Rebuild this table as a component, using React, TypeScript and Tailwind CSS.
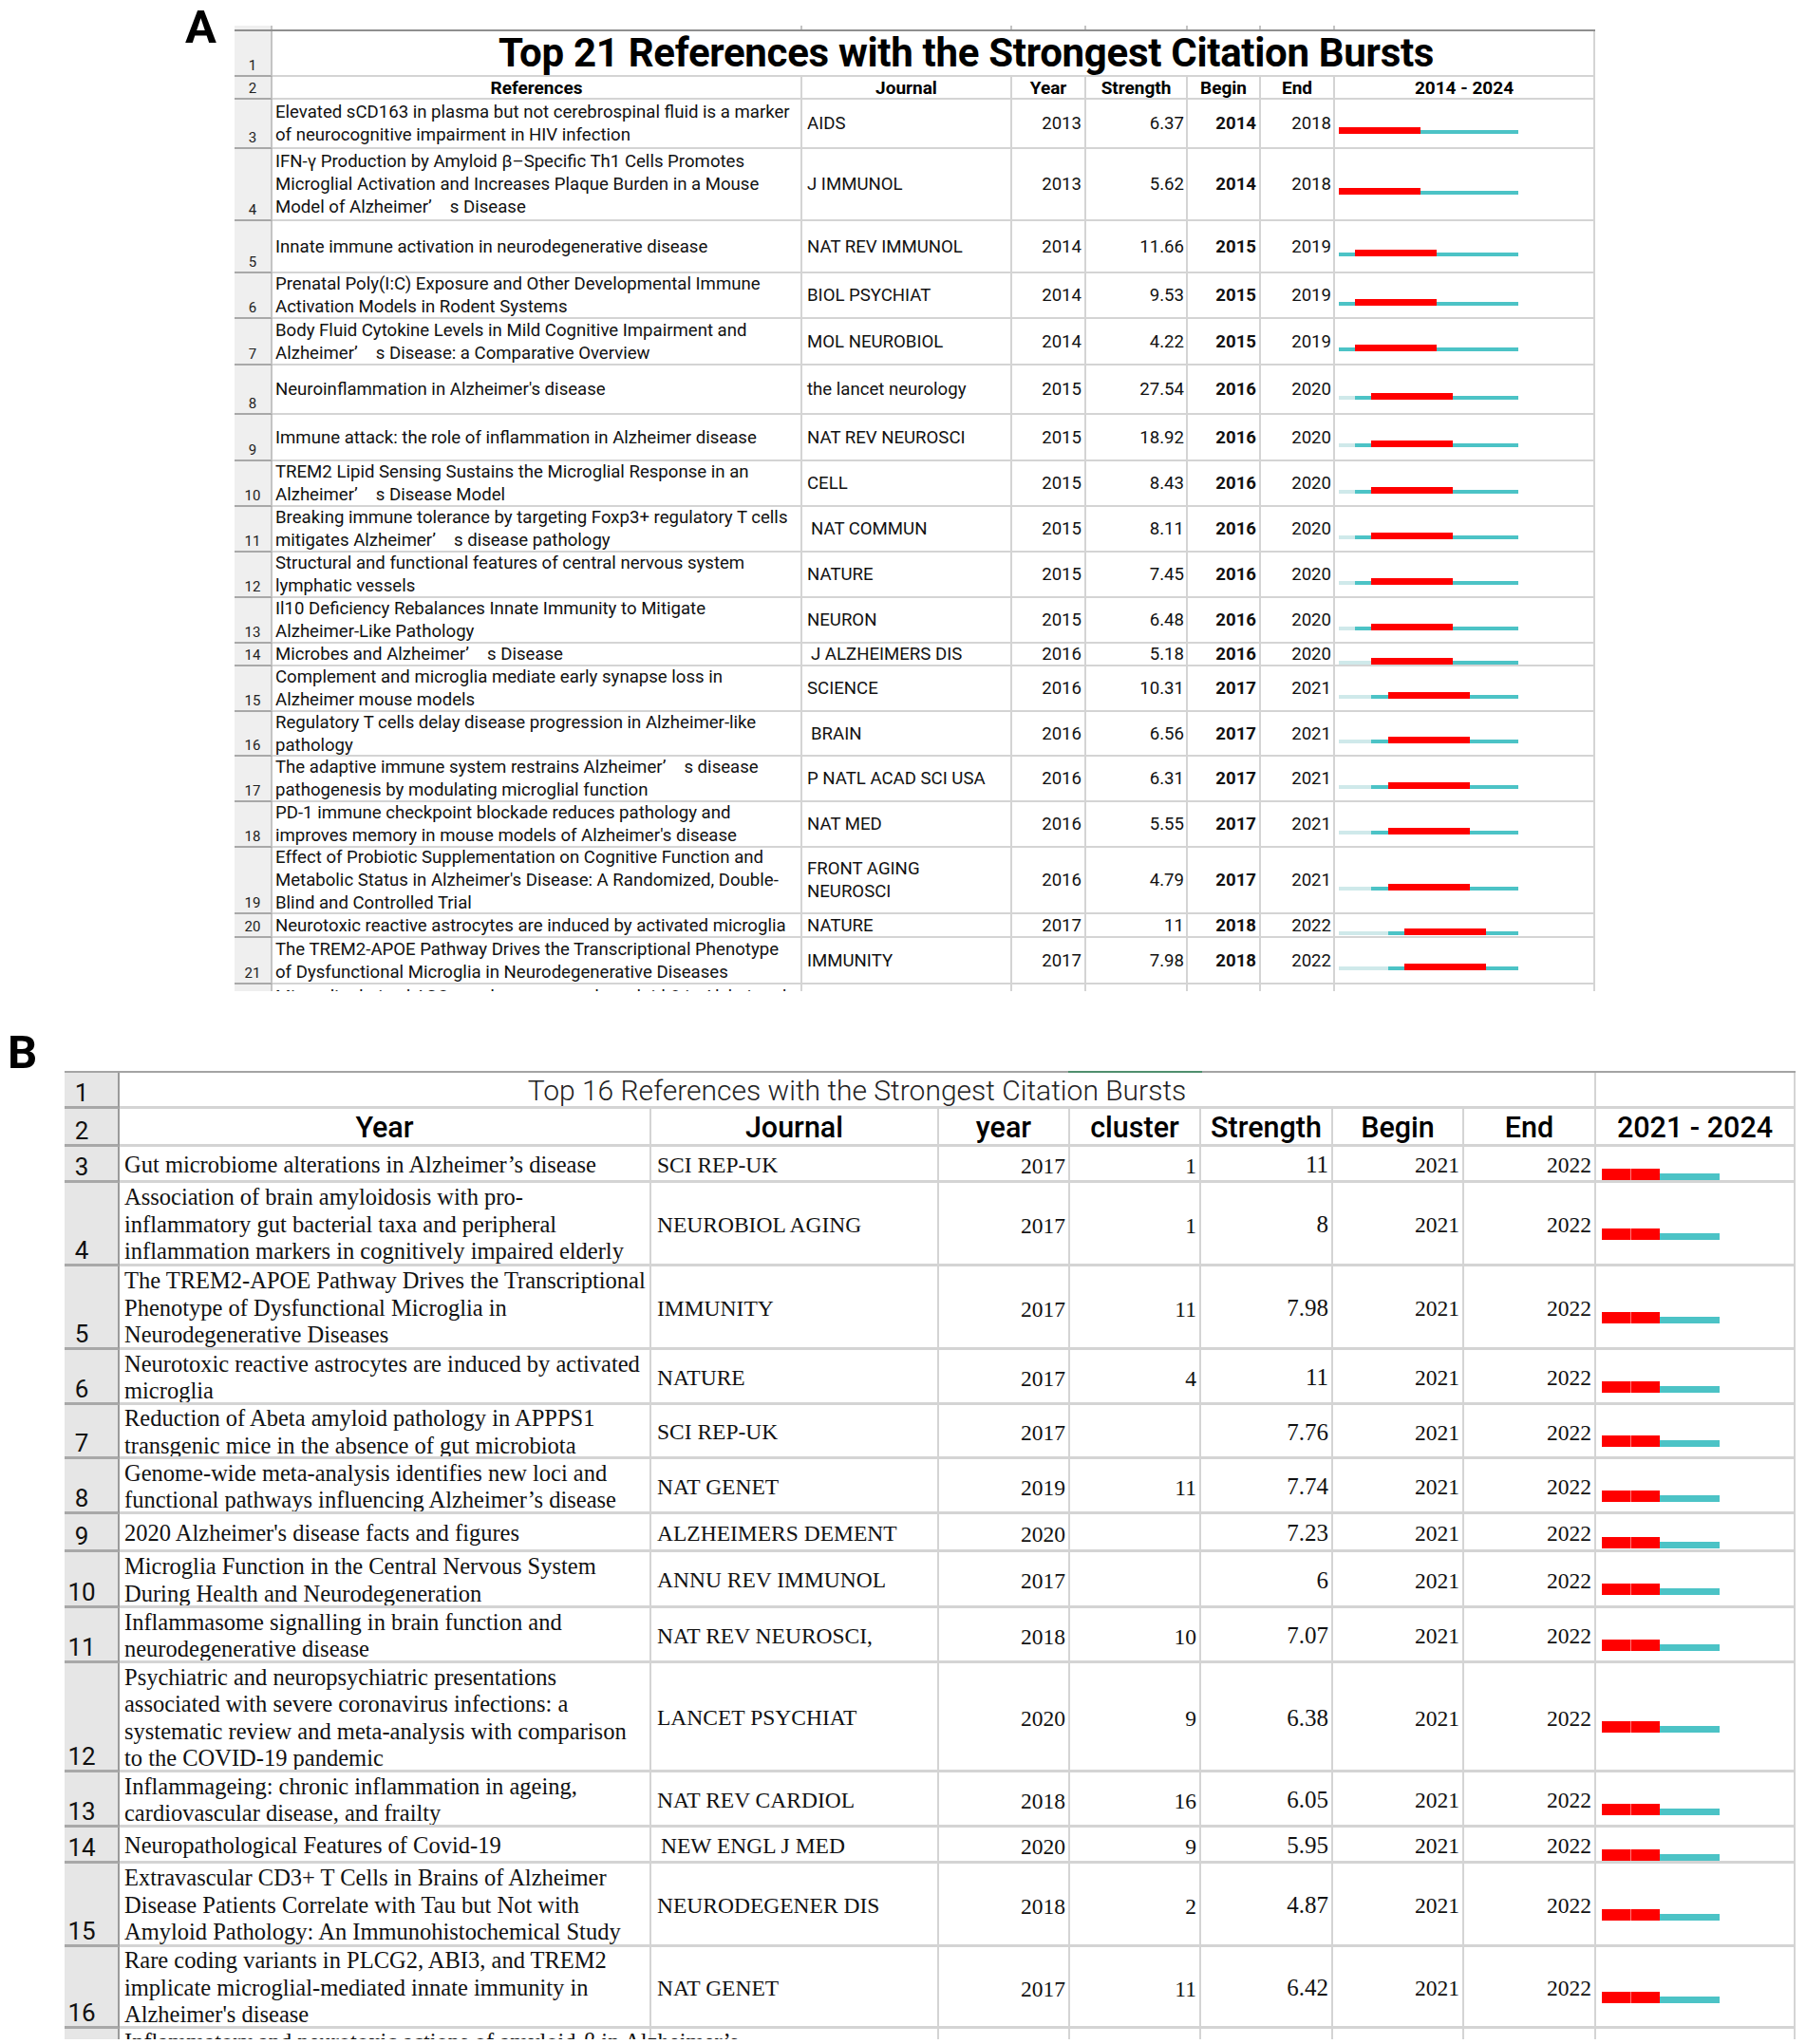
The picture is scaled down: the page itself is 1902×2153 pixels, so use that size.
import React from "react";

type ARow = {
  n: number;
  h: string;
  lines: string[];
  j: string[];
  ji?: boolean;
  y: number;
  s: string;
  b: number;
  e: number;
};

const aRows: ARow[] = [
  { n: 3, h: "h-[52px]", lines: ["Elevated sCD163 in plasma but not cerebrospinal fluid is a marker", "of neurocognitive impairment in HIV infection"], j: ["AIDS"], y: 2013, s: "6.37", b: 2014, e: 2018 },
  { n: 4, h: "h-[76px]", lines: ["IFN-γ Production by Amyloid β–Specific Th1 Cells Promotes", "Microglial Activation and Increases Plaque Burden in a Mouse", "Model of Alzheimer’\u2003s Disease"], j: ["J IMMUNOL"], y: 2013, s: "5.62", b: 2014, e: 2018 },
  { n: 5, h: "h-[55px]", lines: ["Innate immune activation in neurodegenerative disease"], j: ["NAT REV IMMUNOL"], y: 2014, s: "11.66", b: 2015, e: 2019 },
  { n: 6, h: "h-[48px]", lines: ["Prenatal Poly(I:C) Exposure and Other Developmental Immune", "Activation Models in Rodent Systems"], j: ["BIOL PSYCHIAT"], y: 2014, s: "9.53", b: 2015, e: 2019 },
  { n: 7, h: "h-[49px]", lines: ["Body Fluid Cytokine Levels in Mild Cognitive Impairment and", "Alzheimer’\u2003s Disease: a Comparative Overview"], j: ["MOL NEUROBIOL"], y: 2014, s: "4.22", b: 2015, e: 2019 },
  { n: 8, h: "h-[52px]", lines: ["Neuroinflammation in Alzheimer's disease"], j: ["the lancet neurology"], y: 2015, s: "27.54", b: 2016, e: 2020 },
  { n: 9, h: "h-[49px]", lines: ["Immune attack: the role of inflammation in Alzheimer disease"], j: ["NAT REV NEUROSCI"], y: 2015, s: "18.92", b: 2016, e: 2020 },
  { n: 10, h: "h-[48px]", lines: ["TREM2 Lipid Sensing Sustains the Microglial Response in an", "Alzheimer’\u2003s Disease Model"], j: ["CELL"], y: 2015, s: "8.43", b: 2016, e: 2020 },
  { n: 11, h: "h-[48px]", lines: ["Breaking immune tolerance by targeting Foxp3+ regulatory T cells", "mitigates Alzheimer’\u2003s disease pathology"], j: ["NAT COMMUN"], ji: true, y: 2015, s: "8.11", b: 2016, e: 2020 },
  { n: 12, h: "h-[48px]", lines: ["Structural and functional features of central nervous system", "lymphatic vessels"], j: ["NATURE"], y: 2015, s: "7.45", b: 2016, e: 2020 },
  { n: 13, h: "h-[48px]", lines: ["Il10 Deficiency Rebalances Innate Immunity to Mitigate", "Alzheimer-Like Pathology"], j: ["NEURON"], y: 2015, s: "6.48", b: 2016, e: 2020 },
  { n: 14, h: "h-[24px]", lines: ["Microbes and Alzheimer’\u2003s Disease"], j: ["J ALZHEIMERS DIS"], ji: true, y: 2016, s: "5.18", b: 2016, e: 2020 },
  { n: 15, h: "h-[48px]", lines: ["Complement and microglia mediate early synapse loss in", "Alzheimer mouse models"], j: ["SCIENCE"], y: 2016, s: "10.31", b: 2017, e: 2021 },
  { n: 16, h: "h-[47px]", lines: ["Regulatory T cells delay disease progression in Alzheimer-like", "pathology"], j: ["BRAIN"], ji: true, y: 2016, s: "6.56", b: 2017, e: 2021 },
  { n: 17, h: "h-[48px]", lines: ["The adaptive immune system restrains Alzheimer’\u2003s disease", "pathogenesis by modulating microglial function"], j: ["P NATL ACAD SCI USA"], y: 2016, s: "6.31", b: 2017, e: 2021 },
  { n: 18, h: "h-[48px]", lines: ["PD-1 immune checkpoint blockade reduces pathology and", "improves memory in mouse models of Alzheimer's disease"], j: ["NAT MED"], y: 2016, s: "5.55", b: 2017, e: 2021 },
  { n: 19, h: "h-[70px]", lines: ["Effect of Probiotic Supplementation on Cognitive Function and", "Metabolic Status in Alzheimer's Disease: A Randomized, Double-", "Blind and Controlled Trial"], j: ["FRONT AGING", "NEUROSCI"], y: 2016, s: "4.79", b: 2017, e: 2021 },
  { n: 20, h: "h-[25px]", lines: ["Neurotoxic reactive astrocytes are induced by activated microglia"], j: ["NATURE"], y: 2017, s: "11", b: 2018, e: 2022 },
  { n: 21, h: "h-[49px]", lines: ["The TREM2-APOE Pathway Drives the Transcriptional Phenotype", "of Dysfunctional Microglia in Neurodegenerative Diseases"], j: ["IMMUNITY"], y: 2017, s: "7.98", b: 2018, e: 2022 },
];

type BRow = { n: number; h: string; lines: string[]; j: string; ji?: boolean; y: string; c: string; s: string };

const bRows: BRow[] = [
  { n: 3, h: "h-[38px]", lines: ["Gut microbiome alterations in Alzheimer’s disease"], j: "SCI REP-UK", y: "2017", c: "1", s: "11" },
  { n: 4, h: "h-[88px]", lines: ["Association of brain amyloidosis with pro-", "inflammatory gut bacterial taxa and peripheral", "inflammation markers in cognitively impaired elderly"], j: "NEUROBIOL AGING", y: "2017", c: "1", s: "8" },
  { n: 5, h: "h-[88px]", lines: ["The TREM2-APOE Pathway Drives the Transcriptional", "Phenotype of Dysfunctional Microglia in", "Neurodegenerative Diseases"], j: "IMMUNITY", y: "2017", c: "11", s: "7.98" },
  { n: 6, h: "h-[58px]", lines: ["Neurotoxic reactive astrocytes are induced by activated", "microglia"], j: "NATURE", y: "2017", c: "4", s: "11" },
  { n: 7, h: "h-[57px]", lines: ["Reduction of Abeta amyloid pathology in APPPS1", "transgenic mice in the absence of gut microbiota"], j: "SCI REP-UK", y: "2017", c: "", s: "7.76" },
  { n: 8, h: "h-[58px]", lines: ["Genome-wide meta-analysis identifies new loci and", "functional pathways influencing Alzheimer’s disease"], j: "NAT GENET", y: "2019", c: "11", s: "7.74" },
  { n: 9, h: "h-[40px]", lines: ["2020 Alzheimer's disease facts and figures"], j: "ALZHEIMERS DEMENT", y: "2020", c: "", s: "7.23" },
  { n: 10, h: "h-[59px]", lines: ["Microglia Function in the Central Nervous System", "During Health and Neurodegeneration"], j: "ANNU REV IMMUNOL", y: "2017", c: "", s: "6" },
  { n: 11, h: "h-[58px]", lines: ["Inflammasome signalling in brain function and", "neurodegenerative disease"], j: "NAT REV NEUROSCI,", y: "2018", c: "10", s: "7.07" },
  { n: 12, h: "h-[115px]", lines: ["Psychiatric and neuropsychiatric presentations", "associated with severe coronavirus infections: a", "systematic review and meta-analysis with comparison", "to the COVID-19 pandemic"], j: "LANCET PSYCHIAT", y: "2020", c: "9", s: "6.38" },
  { n: 13, h: "h-[58px]", lines: ["Inflammageing: chronic inflammation in ageing,", "cardiovascular disease, and frailty"], j: "NAT REV CARDIOL", y: "2018", c: "16", s: "6.05" },
  { n: 14, h: "h-[38px]", lines: ["Neuropathological Features of Covid-19"], j: "NEW ENGL J MED", ji: true, y: "2020", c: "9", s: "5.95" },
  { n: 15, h: "h-[88px]", lines: ["Extravascular CD3+ T Cells in Brains of Alzheimer", "Disease Patients Correlate with Tau but Not with", "Amyloid Pathology: An Immunohistochemical Study"], j: "NEURODEGENER DIS", y: "2018", c: "2", s: "4.87" },
  { n: 16, h: "h-[86px]", lines: ["Rare coding variants in PLCG2, ABI3, and TREM2", "implicate microglial-mediated innate immunity in", "Alzheimer's disease"], j: "NAT GENET", y: "2017", c: "11", s: "6.42" },
];

const bA = "border-r-2 border-b-2 border-[#d4d4d4]";
const rhA = "w-[40px] shrink-0 bg-[#efefef] border-r-2 border-b-2 border-r-[#c4c4c4] border-b-[#a8a8a8] flex items-end justify-center pb-[2px] text-[15px] leading-none text-[#222]";

function BarA({ y, b, e }: { y: number; b: number; e: number }) {
  const yrs = Array.from({ length: 11 }, (_, i) => 2014 + i);
  return (
    <div className="flex items-end h-[7px]">
      {yrs.map((yr) => {
        const cls =
          yr >= b && yr <= e
            ? "h-[7px] bg-[#ff0000]"
            : yr < y
            ? "h-[4px] bg-[#cfe9ea]"
            : "h-[4px] bg-[#4cc3c6]";
        return <div key={yr} className={cls} style={{ width: 17.2 }} />;
      })}
    </div>
  );
}

function BarB() {
  return (
    <div className="flex items-end h-[12px]">
      <div className="h-[12px] w-[30px] bg-[#ff0000]" />
      <div className="h-[12px] w-[31px] bg-[#ff0000] border-l border-[#ff7a7a]" />
      <div className="h-[7px] w-[63px] bg-[#4cc3c6]" />
    </div>
  );
}

function TableA() {
  return (
    <div className="w-[1433px] font-['Roboto','Liberation_Sans',sans-serif] text-[18.6px] text-[#111]">
      {/* column header remnant */}
      <div className="flex h-[4px]">
        <div className="w-[40px] bg-[#efefef] border-r-2 border-[#c4c4c4]" />
        <div className="w-[558px] border-r-2 border-[#c4c4c4]" />
        <div className="w-[221px] border-r-2 border-[#c4c4c4]" />
        <div className="w-[78px] border-r-2 border-[#c4c4c4]" />
        <div className="w-[107px] border-r-2 border-[#c4c4c4]" />
        <div className="w-[77px] border-r-2 border-[#c4c4c4]" />
        <div className="w-[78px] border-r-2 border-[#c4c4c4]" />
        <div className="w-[274px]" />
      </div>
      <div className="h-[2px] bg-[#8f8f8f]" />
      {/* title row */}
      <div className="flex h-[48px]">
        <div className={rhA}>1</div>
        <div className={`w-[1393px] ${bA} flex items-center justify-center pl-[70px] text-[42px] font-bold leading-none tracking-[-0.3px] text-black`}>
          Top 21 References with the Strongest Citation Bursts
        </div>
      </div>
      {/* header row */}
      <div className="flex h-[24px] font-bold text-black text-[19px] leading-none">
        <div className={`${rhA} font-normal`}>2</div>
        <div className={`w-[558px] ${bA} flex items-center justify-center pt-[1px]`}>References</div>
        <div className={`w-[221px] ${bA} flex items-center justify-center pt-[1px]`}>Journal</div>
        <div className={`w-[78px] ${bA} flex items-center justify-center pt-[1px]`}>Year</div>
        <div className={`w-[107px] ${bA} flex items-center justify-center pt-[1px]`}>Strength</div>
        <div className={`w-[77px] ${bA} flex items-center justify-center pt-[1px]`}>Begin</div>
        <div className={`w-[78px] ${bA} flex items-center justify-center pt-[1px]`}>End</div>
        <div className={`w-[274px] ${bA} flex items-center justify-center pt-[1px]`}>2014 - 2024</div>
      </div>
      {aRows.map((r) => (
        <div key={r.n} className={`flex ${r.h} leading-[24px]`}>
          <div className={rhA}>{r.n}</div>
          <div className={`w-[558px] shrink-0 ${bA} flex flex-col justify-center pl-[3px] overflow-hidden`}>
            {r.lines.map((l, i) => (
              <div key={i} className="whitespace-pre">{l}</div>
            ))}
          </div>
          <div className={`w-[221px] shrink-0 ${bA} flex flex-col justify-center ${r.ji ? "pl-[9px]" : "pl-[5px]"}`}>
            {r.j.map((l, i) => (
              <div key={i} className="whitespace-pre">{l}</div>
            ))}
          </div>
          <div className={`w-[78px] shrink-0 ${bA} flex items-center justify-end pr-[3px]`}>{r.y}</div>
          <div className={`w-[107px] shrink-0 ${bA} flex items-center justify-end pr-[2px]`}>{r.s}</div>
          <div className={`w-[77px] shrink-0 ${bA} flex items-center justify-end pr-[3px] font-bold`}>{r.b}</div>
          <div className={`w-[78px] shrink-0 ${bA} flex items-center justify-end pr-[2px]`}>{r.e}</div>
          <div className={`w-[274px] shrink-0 ${bA} flex items-center pt-[14px] pl-[4px]`}>
            <BarA y={r.y} b={r.b} e={r.e} />
          </div>
        </div>
      ))}
      {/* partial row */}
      <div className="flex h-[7px] overflow-hidden leading-[24px]">
        <div className="w-[40px] shrink-0 bg-[#efefef] border-r-2 border-[#c4c4c4]" />
        <div className="w-[558px] shrink-0 border-r-2 border-[#d4d4d4] pl-[3px] pt-[1px] whitespace-pre">
          Microglia-derived ASC specks cross-seed amyloid-β in Alzheimer’s
        </div>
        <div className="w-[221px] shrink-0 border-r-2 border-[#d4d4d4]" />
        <div className="w-[78px] shrink-0 border-r-2 border-[#d4d4d4]" />
        <div className="w-[107px] shrink-0 border-r-2 border-[#d4d4d4]" />
        <div className="w-[77px] shrink-0 border-r-2 border-[#d4d4d4]" />
        <div className="w-[78px] shrink-0 border-r-2 border-[#d4d4d4]" />
        <div className="w-[274px] shrink-0 border-r-2 border-[#d4d4d4]" />
      </div>
    </div>
  );
}

const bB = "border-r-2 border-b-[3px] border-[#d4d4d4]";
const rhB = "w-[58px] shrink-0 bg-[#e6e6e6] border-r-2 border-b-[3px] border-r-[#9a9a9a] border-b-[#a8a8a8] flex items-end justify-center pr-[20px] pb-[1px] font-['Roboto','Liberation_Sans',sans-serif] text-[26px] leading-none text-[#111]";

function TableB() {
  return (
    <div className="w-[1823px] font-['Liberation_Serif','Times_New_Roman',serif] text-[24.5px] text-[#111]">
      <div className="flex h-[2px]">
        <div className="w-[1057px] bg-[#a4a4a4]" />
        <div className="w-[141px] bg-[#4f8f6e]" />
        <div className="w-[625px] bg-[#a4a4a4]" />
      </div>
      {/* title row */}
      <div className="flex h-[38px]">
        <div className={rhB}>1</div>
        <div className={`w-[1555px] shrink-0 ${bB} flex items-center justify-center pt-[2px] font-['Roboto','Liberation_Sans',sans-serif] font-light text-[30px] leading-none text-[#222]`}>
          Top 16 References with the Strongest Citation Bursts
        </div>
        <div className={`w-[210px] shrink-0 ${bB}`} />
      </div>
      {/* header row */}
      <div className="flex h-[40px] font-['Roboto','Liberation_Sans',sans-serif] font-medium text-[30.5px] leading-none text-black">
        <div className={`${rhB} font-normal text-[26px]`}>2</div>
        <div className={`w-[560px] shrink-0 ${bB} flex items-center justify-center pt-[4px]`}>Year</div>
        <div className={`w-[303px] shrink-0 ${bB} flex items-center justify-center pt-[4px]`}>Journal</div>
        <div className={`w-[138px] shrink-0 ${bB} flex items-center justify-center pt-[4px]`}>year</div>
        <div className={`w-[138px] shrink-0 ${bB} flex items-center justify-center pt-[4px]`}>cluster</div>
        <div className={`w-[139px] shrink-0 ${bB} flex items-center justify-center pt-[4px]`}>Strength</div>
        <div className={`w-[138px] shrink-0 ${bB} flex items-center justify-center pt-[4px]`}>Begin</div>
        <div className={`w-[139px] shrink-0 ${bB} flex items-center justify-center pt-[4px]`}>End</div>
        <div className={`w-[210px] shrink-0 ${bB} flex items-center justify-center pt-[4px]`}>2021 - 2024</div>
      </div>
      {bRows.map((r) => (
        <div key={r.n} className={`flex ${r.h} leading-[28.5px]`}>
          <div className={rhB}>{r.n}</div>
          <div className={`w-[560px] shrink-0 ${bB} flex flex-col justify-center pl-[5px] pt-[3px] overflow-hidden`}>
            {r.lines.map((l, i) => (
              <div key={i} className="whitespace-pre">{l}</div>
            ))}
          </div>
          <div className={`w-[303px] shrink-0 ${bB} flex items-center ${r.ji ? "pl-[10px]" : "pl-[6px]"} pt-[3px] whitespace-pre text-[23.5px]`}>{r.j}</div>
          <div className={`w-[138px] shrink-0 ${bB} flex items-center justify-end pr-[3px] pt-[5px] text-[23.5px]`}>{r.y}</div>
          <div className={`w-[138px] shrink-0 ${bB} flex items-center justify-end pr-[3px] pt-[5px] text-[23.5px]`}>{r.c}</div>
          <div className={`w-[139px] shrink-0 ${bB} flex items-center justify-end pr-[3px] pt-[4px] text-[25px]`}>{r.s}</div>
          <div className={`w-[138px] shrink-0 ${bB} flex items-center justify-end pr-[3px] pt-[4px] text-[23.5px]`}>2021</div>
          <div className={`w-[139px] shrink-0 ${bB} flex items-center justify-end pr-[3px] pt-[4px] text-[23.5px]`}>2022</div>
          <div className={`w-[210px] shrink-0 ${bB} flex items-center pl-[6px] pt-[22px]`}>
            <BarB />
          </div>
        </div>
      ))}
      {/* partial row */}
      <div className="flex h-[11px] overflow-hidden leading-[28.5px]">
        <div className="w-[58px] shrink-0 bg-[#e6e6e6] border-r-2 border-[#9a9a9a]" />
        <div className="w-[560px] shrink-0 border-r-2 border-[#d4d4d4] pl-[5px] whitespace-pre">
          Inflammatory and neurotoxic actions of amyloid-β in Alzheimer’s
        </div>
        <div className="w-[303px] shrink-0 border-r-2 border-[#d4d4d4]" />
        <div className="w-[138px] shrink-0 border-r-2 border-[#d4d4d4]" />
        <div className="w-[138px] shrink-0 border-r-2 border-[#d4d4d4]" />
        <div className="w-[139px] shrink-0 border-r-2 border-[#d4d4d4]" />
        <div className="w-[138px] shrink-0 border-r-2 border-[#d4d4d4]" />
        <div className="w-[139px] shrink-0 border-r-2 border-[#d4d4d4]" />
        <div className="w-[210px] shrink-0 border-r-2 border-[#d4d4d4]" />
      </div>
    </div>
  );
}

export default function App() {
  return (
    <div className="w-[1902px] h-[2153px] bg-white overflow-hidden">
      <div className="flex items-start">
        <div className="w-[247px] shrink-0 pl-[195px] pt-[4px] font-['Roboto','Liberation_Sans',sans-serif] text-[49px] font-bold leading-none text-black">
          A
        </div>
        <div className="mt-[27px]">
          <TableA />
        </div>
      </div>
      <div className="mt-[40px]">
        <div className="h-[44px] pl-[8px] font-['Roboto','Liberation_Sans',sans-serif] text-[49px] font-bold leading-none text-black">
          B
        </div>
        <div className="ml-[68px]">
          <TableB />
        </div>
      </div>
    </div>
  );
}
